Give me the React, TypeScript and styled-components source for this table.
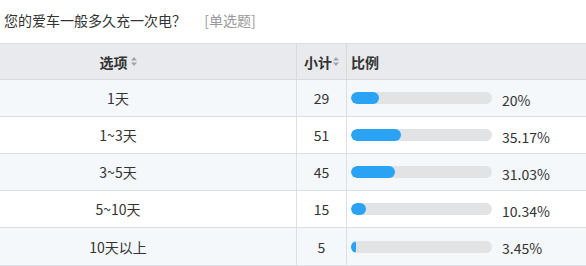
import styled, { createGlobalStyle } from 'styled-components';

const GlobalStyle = createGlobalStyle`
    html, body {
        margin: 0;
        padding: 0;
        background: #fff;
    }
    body {
        font-family: "Noto Sans CJK SC", "Microsoft YaHei", sans-serif;
        color: #333;
    }
`;

type Row = { label: string; count: number; pct: number; text: string };

const rows: Row[] = [
    { label: "1天", count: 29, pct: 20, text: "20%" },
    { label: "1~3天", count: 51, pct: 35.17, text: "35.17%" },
    { label: "3~5天", count: 45, pct: 31.03, text: "31.03%" },
    { label: "5~10天", count: 15, pct: 10.34, text: "10.34%" },
    { label: "10天以上", count: 5, pct: 3.45, text: "3.45%" },
];

// Styled Components
const Page = styled.div`
    width: 586px;
    height: 266px;
    overflow: hidden;
`;

const Title = styled.div`
    height: 43px;
    padding: 0 0 4px 4px;
    display: flex;
    align-items: center;
    font-size: 14px;
    line-height: 20px;
    color: #333;
    box-sizing: border-box;
`;

const Kind = styled.span`
    color: #999;
    margin-left: 12px;
`;

const Table = styled.div`
    display: grid;
    grid-template-columns: 296px 50px 1fr;
    border-top: 1px solid #dcdfe3;
    border-bottom: 3px solid #dcdfe3;
    font-size: 14px;
`;

const HeadCell = styled.div<{ $align: "center" | "left"; $pad?: number }>`
    height: 36px;
    box-sizing: border-box;
    background: #e8eaed;
    border-bottom: 1px solid #d7dade;
    border-left: 1px solid #d7dade;
    &:first-child { border-left: none; }
    display: flex;
    align-items: center;
    justify-content: ${p => p.$align === "center" ? "center" : "flex-start"};
    padding: ${p => p.$align === "left" ? "0 0 0 4px" : `0 ${p.$pad ?? 0}px 0 0`};
    font-weight: bold;
    color: #333;
`;

const Cell = styled.div<{ $odd: boolean; $align: "center" | "left"; $pad?: number; $first?: boolean }>`
    height: 37px;
    box-sizing: border-box;
    background: ${p => p.$odd ? "#f5f8fb" : "#fff"};
    border-bottom: 1px solid #dcdfe3;
    border-left: ${p => p.$first ? "none" : "1px solid #dcdfe3"};
    display: flex;
    align-items: center;
    justify-content: ${p => p.$align === "center" ? "center" : "flex-start"};
    padding: ${p => p.$align === "left" ? "0 0 0 4px" : `0 ${p.$pad ?? 0}px 0 0`};
    color: #333;
    &:nth-last-child(-n+3) { border-bottom: none; }
`;

const Track = styled.div`
    width: 141px;
    height: 12px;
    border-radius: 6px;
    background: #e2e3e5;
    overflow: hidden;
    flex: none;
`;

const Fill = styled.div`
    height: 100%;
    background: #2ba3f5;
    border-radius: 6px;
    min-width: 5px;
`;

const Percent = styled.span`
    margin-left: 10px;
    margin-top: 3px;
`;

const SortWrap = styled.span<{ $gap: number }>`
    display: inline-flex;
    margin-left: ${p => p.$gap}px;
`;

function SortIcon({ gap = 3 }: { gap?: number }) {
    return (
        <SortWrap $gap={gap}>
            <svg width="6" height="9" viewBox="0 0 6 9">
                <path d="M3 0 L6 3.5 L0 3.5 Z" fill="#a0a4aa" />
                <path d="M0 5.5 L6 5.5 L3 9 Z" fill="#a0a4aa" />
            </svg>
        </SortWrap>
    );
}

export default function App() {
    return (
        <Page>
            <GlobalStyle />
            <Title>
                您的爱车一般多久充一次电？<Kind>&nbsp;&nbsp;[单选题]</Kind>
            </Title>
            <Table>
                <HeadCell $align="center" $pad={60}>选项<SortIcon /></HeadCell>
                <HeadCell $align="center">小计<SortIcon gap={1} /></HeadCell>
                <HeadCell $align="left">比例</HeadCell>
                {rows.map((r, i) => {
                    const odd = i % 2 === 0;
                    return [
                        <Cell key={r.label + "a"} $odd={odd} $align="center" $pad={60} $first>{r.label}</Cell>,
                        <Cell key={r.label + "b"} $odd={odd} $align="center">{r.count}</Cell>,
                        <Cell key={r.label + "c"} $odd={odd} $align="left">
                            <Track>
                                <Fill style={{ width: `${r.pct}%` }} />
                            </Track>
                            <Percent>{r.text}</Percent>
                        </Cell>,
                    ];
                })}
            </Table>
        </Page>
    );
}
